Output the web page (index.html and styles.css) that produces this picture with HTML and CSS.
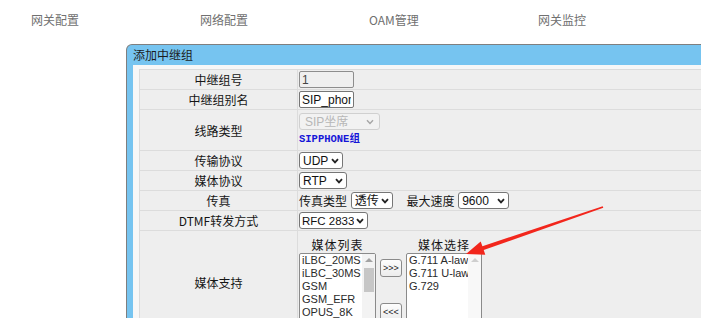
FILE: index.html
```html
<!DOCTYPE html>
<html lang="zh-CN">
<head>
    <meta charset="UTF-8">
    <meta name="viewport" content="width=device-width, initial-scale=1.0">
    <title>添加中继组</title>

    <link rel="stylesheet" href="styles.css">
</head>
<body>

<div class="page">

    <ul class="nav">
        <li>网关配置</li>
        <li>网络配置</li>
        <li>OAM管理</li>
        <li>网关监控</li>
    </ul>

    <div class="panel">
        <div class="panel-title">添加中继组</div>
        <div class="panel-body">
            <table class="form">
                <colgroup>
                    <col class="col-label">
                    <col>
                </colgroup>
                <tr>
                    <td class="label">中继组号</td>
                    <td class="value"><input class="txt txt-readonly" type="text" value="1" readonly></td>
                </tr>
                <tr>
                    <td class="label">中继组别名</td>
                    <td class="value"><input class="txt" type="text" value="SIP_phone"></td>
                </tr>
                <tr>
                    <td class="label">线路类型</td>
                    <td class="value">
                        <select class="sel sel-line" disabled>
                            <option>SIP坐席</option>
                        </select>
                        <div class="group-name">SIPPHONE组</div>
                    </td>
                </tr>
                <tr>
                    <td class="label">传输协议</td>
                    <td class="value">
                        <select class="sel sel-udp">
                            <option>UDP</option>
                            <option>TCP</option>
                        </select>
                    </td>
                </tr>
                <tr>
                    <td class="label">媒体协议</td>
                    <td class="value">
                        <select class="sel sel-rtp">
                            <option>RTP</option>
                            <option>SRTP</option>
                        </select>
                    </td>
                </tr>
                <tr>
                    <td class="label">传真</td>
                    <td class="value">
                        <span class="inline-label">传真类型</span>
                        <select class="sel sel-fax">
                            <option>透传</option>
                            <option>T.38</option>
                        </select>
                        <span class="inline-label speed-label">最大速度</span>
                        <select class="sel sel-speed">
                            <option>9600</option>
                            <option>14400</option>
                        </select>
                    </td>
                </tr>
                <tr>
                    <td class="label">DTMF转发方式</td>
                    <td class="value">
                        <select class="sel sel-dtmf">
                            <option>RFC 2833</option>
                            <option>INFO</option>
                            <option>INBAND</option>
                        </select>
                    </td>
                </tr>
                <tr>
                    <td class="label">媒体支持</td>
                    <td class="value">
                        <div class="media">
                            <div class="media-col">
                                <div class="media-head">媒体列表</div>
                                <div class="listbox list-left">
                                    <ul class="listbox-items">
                                        <li>iLBC_20MS</li>
                                        <li>iLBC_30MS</li>
                                        <li>GSM</li>
                                        <li>GSM_EFR</li>
                                        <li>OPUS_8K</li>
                                    </ul>
                                    <div class="scrollbar">
                                        <span class="scroll-up"></span>
                                        <span class="scroll-thumb"></span>
                                    </div>
                                </div>
                            </div>
                            <div class="media-btns">
                                <button class="move-btn" type="button">&gt;&gt;&gt;</button>
                                <button class="move-btn" type="button">&lt;&lt;&lt;</button>
                            </div>
                            <div class="media-col">
                                <div class="media-head">媒体选择</div>
                                <div class="listbox list-right">
                                    <ul class="listbox-items">
                                        <li>G.711 A-law</li>
                                        <li>G.711 U-law</li>
                                        <li>G.729</li>
                                    </ul>
                                    <div class="scrollbar scrollbar-off">
                                        <span class="scroll-up"></span>
                                    </div>
                                </div>
                            </div>
                        </div>
                    </td>
                </tr>
            </table>
        </div>
    </div>

    <!-- 红色箭头标注 -->
    <svg class="mark" width="703" height="332" viewBox="0 0 703 332">
        <polygon fill="#f2261c" points="603.3,207.8 483.7,250.1 485.3,254.8 466,254 480.7,241.6 482.4,246.3 602.7,206.2"/>
    </svg>

</div>

</body>
</html>
```

FILE: styles.css
```css
body {
    margin: 0;
    padding: 0;
    font-family: "Noto Sans CJK SC", sans-serif;
    background: #fff;
}

.page {
    position: relative;
    width: 701px;
    height: 318px;
    overflow: hidden;
}

.nav {
    display: flex;
    list-style: none;
    margin: 0;
    padding: 12px 0 0 31px;
    height: 32px;
}

.nav li {
    width: 169px;
    flex: none;
    font-size: 12px;
    line-height: 16px;
    color: #707070;
}

.panel {
    margin-left: 126px;
    width: 640px;
    border: 1px solid #7f7f7f;
    border-bottom: none;
    border-radius: 6px 6px 0 0;
    background: #76c4f0;
}

.panel-title {
    height: 20px;
    line-height: 20px;
    padding-left: 6px;
    font-size: 12px;
    color: #1c1c1c;
}

.panel-body {
    margin-left: 6px;
    padding: 4px 0 0 6px;
    background: #f7f7f7;
}

.form {
    width: 100%;
    border-collapse: collapse;
    table-layout: fixed;
    background: #eee;
    border: 1px solid #dcdcdc;
}

.col-label {
    width: 158px;
}

.form td {
    border-bottom: 1px solid #dcdcdc;
    padding: 1px 0 1px 1px;
    font-size: 12px;
    line-height: 17px;
    color: #151515;
    vertical-align: top;
}

.form td.label {
    text-align: center;
    vertical-align: middle;
    border-right: 1px solid #dcdcdc;
    padding: 0;
}

.txt {
    box-sizing: border-box;
    width: 55px;
    height: 17px;
    margin: 0;
    padding: 0 2px;
    border: 1px solid #767676;
    border-radius: 2px;
    font: 12px "Liberation Sans", sans-serif;
    color: #111;
    background: #fff;
    vertical-align: top;
}

.txt-readonly {
    background: #efefef;
    border-color: #8d8d8d;
    color: #444;
}

.sel {
    box-sizing: border-box;
    height: 17px;
    margin: 0;
    padding: 0 13px 0 3px;
    border: 1px solid #767676;
    border-radius: 3px;
    font: 12px "Liberation Sans", "Noto Sans CJK SC", sans-serif;
    color: #111;
    appearance: none;
    -webkit-appearance: none;
    background: #fff url("data:image/svg+xml,%3Csvg xmlns='http://www.w3.org/2000/svg' width='8' height='6'%3E%3Cpath d='M1 1.2 4 4.4 7 1.2' fill='none' stroke='%23222' stroke-width='1.8'/%3E%3C/svg%3E") no-repeat right 3px center;
    vertical-align: top;
}

.sel:disabled {
    color: #a0a0a0;
    border-color: #c4c4c4;
    background-color: #f4f4f4;
    background-image: url("data:image/svg+xml,%3Csvg xmlns='http://www.w3.org/2000/svg' width='8' height='6'%3E%3Cpath d='M1 1.2 4 4.4 7 1.2' fill='none' stroke='%23888' stroke-width='1.4'/%3E%3C/svg%3E");
    background-position: right 5px center;
}

.sel-line { width: 81px; margin-top: 2px; padding-left: 5px; }
.sel-udp { width: 44px; }
.sel-rtp { width: 48px; }
.sel-fax { width: 42px; margin-left: 1px; }
.sel-speed { width: 51px; margin-left: 1px; }
.sel-dtmf { width: 69px; font-size: 11.5px; padding-left: 2px; }

.group-name {
    font: 10.5px "Liberation Mono", "Noto Sans CJK SC", monospace;
    line-height: 19px;
    color: #1515d8;
    font-weight: bold;
}

.speed-label {
    margin-left: 11px;
}

.media {
    display: flex;
    align-items: flex-start;
}

.media-col {
    display: flex;
    flex-direction: column;
}

.media-head {
    padding-top: 4px;
    line-height: 17px;
    text-align: center;
    letter-spacing: 1px;
}

.listbox {
    box-sizing: border-box;
    display: flex;
    height: 80px;
    border: 1px solid #8a8a8a;
    border-radius: 2px;
    background: #fff;
    overflow: hidden;
}

.list-left { width: 77px; }
.list-right { width: 76px; }

.listbox-items {
    flex: 1;
    list-style: none;
    margin: 0;
    padding: 0 0 0 2px;
    font: 11px "Liberation Sans", sans-serif;
    line-height: 13px;
    color: #2a2a2a;
    white-space: nowrap;
    overflow: hidden;
}

.scrollbar {
    flex: none;
    width: 13px;
    display: flex;
    flex-direction: column;
    align-items: center;
    background: #f3f3f3;
}

.scroll-up {
    width: 0;
    height: 0;
    margin: 4px 0 6px;
    border-left: 4px solid transparent;
    border-right: 4px solid transparent;
    border-bottom: 4px solid #a3a3a3;
}

.scroll-thumb {
    width: 10px;
    height: 24px;
    background: #c6c6c6;
}

.scrollbar-off {
    background: #f8f8f8;
}

.scrollbar-off .scroll-up {
    border-bottom-color: #cfcfcf;
}

.media-btns {
    display: flex;
    flex-direction: column;
    gap: 26px;
    margin: 27px 4px 0;
}

.move-btn {
    box-sizing: border-box;
    width: 22px;
    height: 18px;
    padding: 0;
    border: 1px solid #8a8a8a;
    border-radius: 3px;
    background: linear-gradient(#fdfdfd, #ececec);
    font: 9px "Liberation Sans", sans-serif;
    color: #222;
}

.mark {
    position: absolute;
    left: 0;
    top: 0;
    pointer-events: none;
}
```
